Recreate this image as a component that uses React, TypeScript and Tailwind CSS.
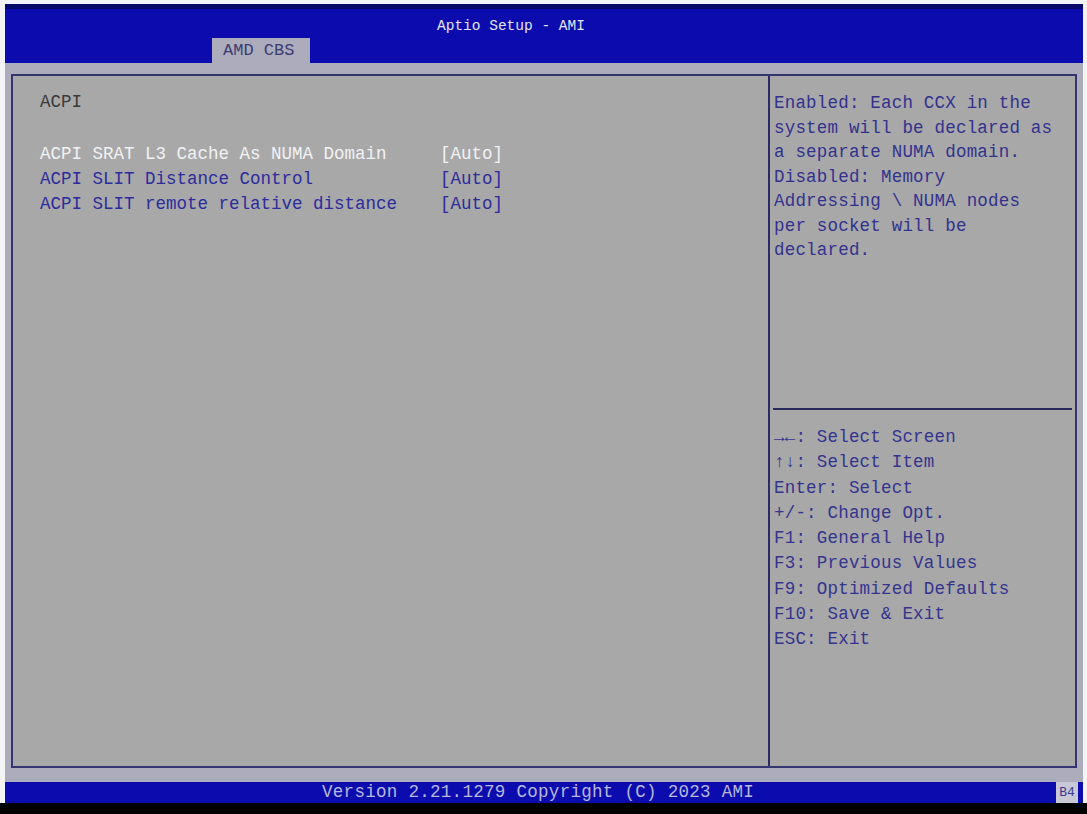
const helpLines = [
  "Enabled: Each CCX in the",
  "system will be declared as",
  "a separate NUMA domain.",
  "Disabled: Memory",
  "Addressing \\ NUMA nodes",
  "per socket will be",
  "declared.",
];

const keyLines = [
  "→←: Select Screen",
  "↑↓: Select Item",
  "Enter: Select",
  "+/-: Change Opt.",
  "F1: General Help",
  "F3: Previous Values",
  "F9: Optimized Defaults",
  "F10: Save & Exit",
  "ESC: Exit",
];

const items = [
  { label: "ACPI SRAT L3 Cache As NUMA Domain", value: "[Auto]", active: true },
  { label: "ACPI SLIT Distance Control", value: "[Auto]", active: false },
  { label: "ACPI SLIT remote relative distance", value: "[Auto]", active: false },
];

export default function App() {
  return (
    <div className="w-[1087px] h-[814px] bg-[#f4f4f6] flex flex-col overflow-hidden font-['Liberation_Mono',monospace] text-[17.5px] leading-[25px]">
      <div className="flex-1 flex flex-col pl-[5px] pr-[4px] pt-[4px]">
        {/* header */}
        <div className="h-[59px] bg-[#0c0cae] border-t-[5px] border-[#08086a] flex flex-col">
          <div className="pl-[432px] pt-[8px] text-[14.5px] leading-[18px] text-[#e4e4f0]">
            Aptio Setup - AMI
          </div>
          <div className="mt-auto pl-[207px] flex">
            <div className="w-[98px] h-[25px] bg-[#acacbc] text-[#3c3c72] text-[17px] leading-[25px] pl-[11px]">
              AMD CBS
            </div>
          </div>
        </div>

        {/* body */}
        <div className="flex-1 bg-[#acacbc] pl-[6px] pr-[6px] pt-[11px] pb-[14px] flex">
          <div className="flex-1 flex border-2 border-[#35356f] bg-[#a8a8a9]">
            <div className="w-[755px] pl-[27px] pt-[14px]">
              <div className="text-[#3a3a3a]">ACPI</div>
              <div className="mt-[27px] flex flex-col">
                {items.map((it) => (
                  <div key={it.label} className="flex">
                    <div className={`w-[400px] ${it.active ? "text-[#f2f2f4]" : "text-[#2c2c9c]"}`}>{it.label}</div>
                    <div className={it.active ? "text-[#f2f2f4]" : "text-[#2c2c9c]"}>{it.value}</div>
                  </div>
                ))}
              </div>
            </div>
            <div className="flex-1 flex flex-col border-l-2 border-[#2a2a66] tracking-[0.2px]">
              <div className="h-[332px] pl-[4px] pt-[15px] text-[#32328e] leading-[24.5px]">
                {helpLines.map((l) => (
                  <div key={l} className="whitespace-pre">{l}</div>
                ))}
              </div>
              <div className="mx-[3px] h-[2px] bg-[#2a2a5c]" />
              <div className="pl-[4px] pt-[15px] text-[#34348e] leading-[25.3px]">
                {keyLines.map((l) => (
                  <div key={l} className="whitespace-pre">{l}</div>
                ))}
              </div>
            </div>
          </div>
        </div>

        {/* footer */}
        <div className="h-[21px] bg-[#0c0cae] flex items-center">
          <div className="pl-[317px] text-[#b8b8dc] text-[17.5px] leading-[21px] tracking-[0.3px]">
            Version 2.21.1279 Copyright (C) 2023 AMI
          </div>
          <div className="ml-auto mr-[5px] w-[22px] h-[21px] bg-[#c8c8d6] text-[#3a3a8a] text-[13px] leading-[21px] text-center">
            B4
          </div>
        </div>
      </div>
      <div className="h-[11px] bg-black" />
    </div>
  );
}
